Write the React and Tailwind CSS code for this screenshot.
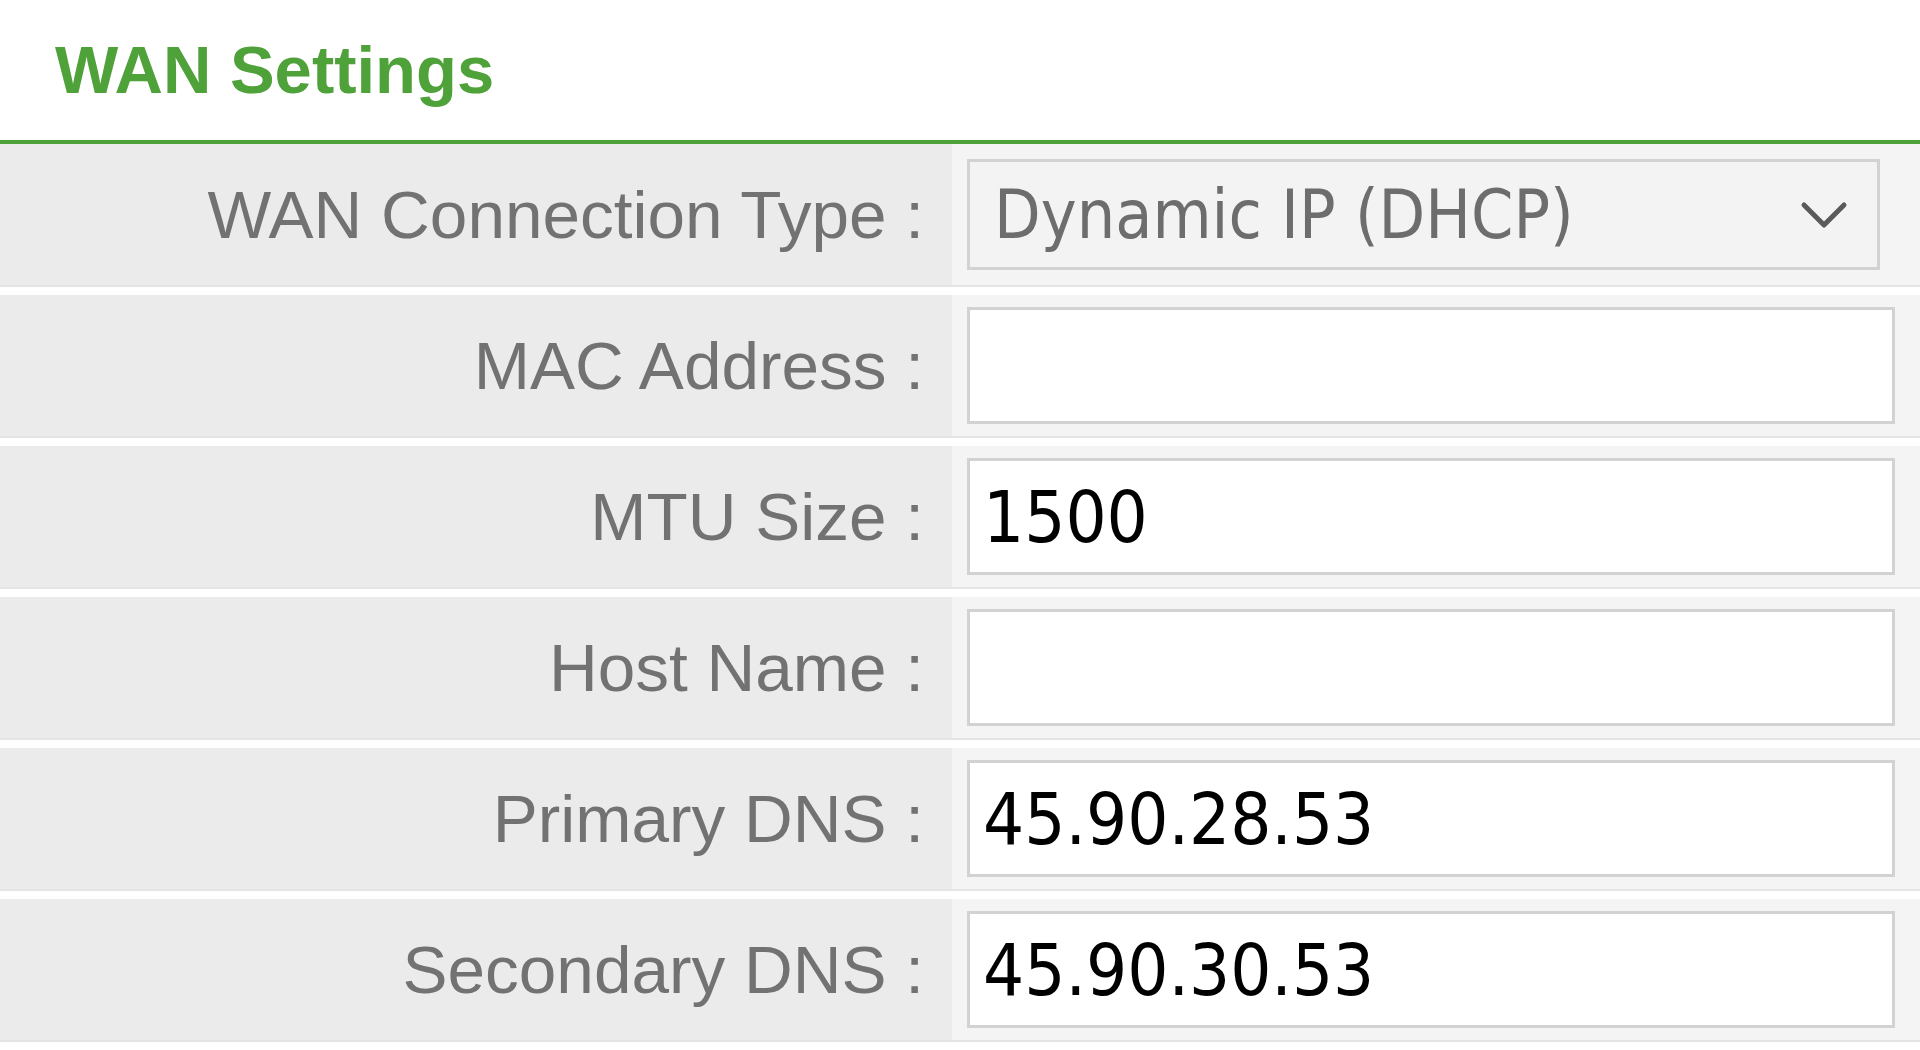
import React from "react";

const rows = [
  { label: "WAN Connection Type :", type: "select", value: "Dynamic IP (DHCP)" },
  { label: "MAC Address :", type: "input", value: "" },
  { label: "MTU Size :", type: "input", value: "1500" },
  { label: "Host Name :", type: "input", value: "" },
  { label: "Primary DNS :", type: "input", value: "45.90.28.53" },
  { label: "Secondary DNS :", type: "input", value: "45.90.30.53" },
];

const valueFont = { fontFamily: '"DejaVu Sans Condensed", "DejaVu Sans", sans-serif' };

function Field({ row }) {
  if (row.type === "select") {
    return (
      <div className="w-[913px] h-[111px] border-[3px] border-[#d2d2d2] bg-[#f3f3f3] flex items-center pl-[24px] pr-[29px]">
        <span
          className="flex-1 text-[67.5px] leading-none text-[#6d6d6d] [font-stretch:condensed]"
          style={valueFont}
        >
          {row.value}
        </span>
        <svg width="48" height="30" viewBox="0 0 48 30" fill="none">
          <polyline points="4,5 24,25 44,5" stroke="#5a5a5a" strokeWidth="5" strokeLinecap="round" strokeLinejoin="round" />
        </svg>
      </div>
    );
  }
  return (
    <div className="w-[928px] h-[117px] border-[3px] border-[#d2d2d2] bg-white flex items-center pl-[13px]">
      <span
        className="text-[72px] leading-none text-black [font-stretch:condensed]"
        style={valueFont}
      >
        {row.value}
      </span>
    </div>
  );
}

export default function App() {
  return (
    <div className="w-[1920px] h-[1050px] bg-white overflow-hidden">
      <div className="h-[140px] pt-[36px] pl-[55px]">
        <h2
          className="text-[67px] leading-none font-bold text-[#4fa13a]"
          style={{ fontFamily: '"Liberation Sans", Arial, sans-serif' }}
        >
          WAN Settings
        </h2>
      </div>
      <div className="h-[4px] bg-[#4fa13a]" />
      <div className="flex flex-col">
        {rows.map((row) => (
          <div key={row.label} className="flex h-[143px] border-b-[2px] border-[#e4e4e4] mb-[8px]">
            <div
              className="w-[952px] bg-[#ebebeb] flex items-center justify-end pr-[28px] text-[67.5px] leading-none text-[#727272]"
              style={{ fontFamily: '"Liberation Sans", Arial, sans-serif' }}
            >
              {row.label}
            </div>
            <div className="flex-1 bg-[#f4f4f4] flex items-center pl-[15px]">
              <Field row={row} />
            </div>
          </div>
        ))}
      </div>
    </div>
  );
}
